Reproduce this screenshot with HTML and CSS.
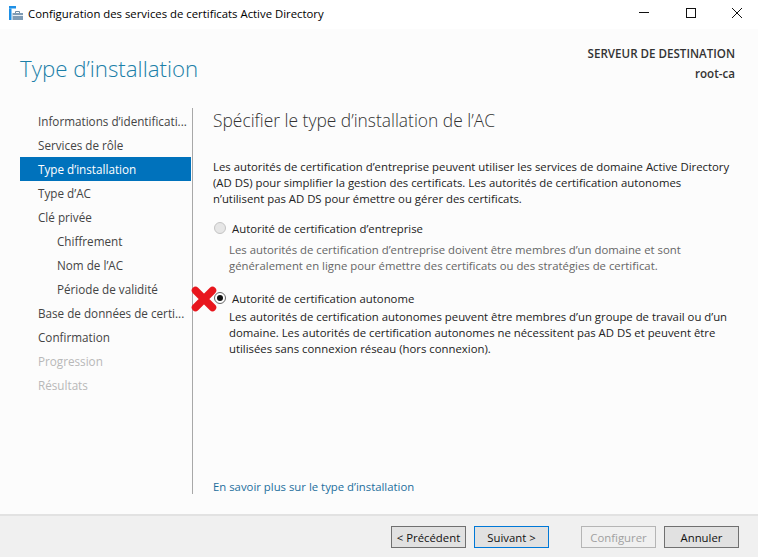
FILE: index.html
```html
<!DOCTYPE html>
<html lang="fr">
<head>
<meta charset="utf-8">
<title>Configuration des services de certificats Active Directory</title>
<link rel="stylesheet" href="styles.css">
</head>
<body>
<div class="window">
  <div class="titlebar">
    <svg class="app-icon" width="24" height="21" viewBox="0 0 24 21">
      <rect x="9" y="6" width="7" height="2.500" fill="#1e90e6"/>
      <rect x="9" y="8.500" width="2.500" height="11.500" fill="#1e90e6"/>
      <path d="M12.500 13h10.500v7H12.500z" fill="#7f9cb5"/>
      <path d="M15.500 13v-1.500h4V13" fill="none" stroke="#6f8ba3"/>
      <rect x="12.500" y="15" width="10.500" height="1" fill="#e8eef3"/>
    </svg>
    <span class="title-text">Configuration des services de certificats Active Directory</span>
    <div class="controls">
      <svg width="12" height="12" viewBox="0 0 12 12"><path d="M0 5.500h10" stroke="#111" fill="none"/></svg>
      <svg width="12" height="12" viewBox="0 0 12 12"><rect x="1.500" y="1.500" width="9" height="9" stroke="#111" fill="none"/></svg>
      <svg width="12" height="12" viewBox="0 0 12 12"><path d="M1 1l10 10M11 1L1 11" stroke="#111" fill="none"/></svg>
    </div>
  </div>
  <header class="head">
    <h1 class="page-title">Type d’installation</h1>
    <div class="server">
      <div class="server-label">SERVEUR DE DESTINATION</div>
      <div class="server-name">root-ca</div>
    </div>
  </header>
  <div class="content">
    <nav class="nav">
      <div class="nav-item">Informations d’identificati...</div>
      <div class="nav-item">Services de rôle</div>
      <div class="nav-item active">Type d’installation</div>
      <div class="nav-item">Type d’AC</div>
      <div class="nav-item">Clé privée</div>
      <div class="nav-item sub">Chiffrement</div>
      <div class="nav-item sub">Nom de l’AC</div>
      <div class="nav-item sub">Période de validité</div>
      <div class="nav-item">Base de données de certi...</div>
      <div class="nav-item">Confirmation</div>
      <div class="nav-item off">Progression</div>
      <div class="nav-item off">Résultats</div>
    </nav>
    <main class="main">
      <h2 class="main-title">Spécifier le type d’installation de l’AC</h2>
      <p class="intro">Les autorités de certification d’entreprise peuvent utiliser les services de domaine Active Directory<br>(AD DS) pour simplifier la gestion des certificats. Les autorités de certification autonomes<br>n’utilisent pas AD DS pour émettre ou gérer des certificats.</p>
      <div class="option first">
        <div class="option-row"><span class="radio disabled"></span><span class="opt-label">Autorité de certification d’entreprise</span></div>
        <p class="opt-desc">Les autorités de certification d’entreprise doivent être membres d’un domaine et sont<br>généralement en ligne pour émettre des certificats ou des stratégies de certificat.</p>
      </div>
      <div class="option second">
        <div class="option-row">
          <svg class="cross" width="28" height="28" viewBox="0 0 28 28"><path d="M5.500 5.500L22.500 22.500M22.500 5.500L5.500 22.500" stroke="#e8161d" stroke-width="7.500" stroke-linecap="round"/></svg>
          <span class="radio checked"></span><span class="opt-label">Autorité de certification autonome</span>
        </div>
        <p class="opt-desc dark">Les autorités de certification autonomes peuvent être membres d’un groupe de travail ou d’un<br>domaine. Les autorités de certification autonomes ne nécessitent pas AD DS et peuvent être<br>utilisées sans connexion réseau (hors connexion).</p>
      </div>
      <a class="more" href="#">En savoir plus sur le type d’installation</a>
    </main>
  </div>
  <footer class="footer">
    <button class="btn">&lt; Précédent</button>
    <button class="btn focus">Suivant &gt;</button>
    <button class="btn disabled-btn">Configurer</button>
    <button class="btn">Annuler</button>
  </footer>
</div>
</body>
</html>
```
FILE: styles.css
```css
* { box-sizing: border-box; }
html, body { margin: 0; padding: 0; }
body { width: 758px; height: 557px; overflow: hidden; font-family: "Open Sans", "Noto Sans", sans-serif; font-size: 11.4px; color: #1e1e1e; }
.window { display: flex; flex-direction: column; width: 758px; height: 557px; background: #fcfcfc; }
.titlebar { height: 29px; flex: none; display: flex; align-items: center; background: #fff; }
.app-icon { flex: none; align-self: flex-start; }
.title-text { margin-left: 4px; padding-bottom: 2px; font-size: 11.35px; color: #000; }
.controls { margin-left: auto; display: flex; gap: 34px; padding: 0 15px 3px 0; }
.head { height: 79px; flex: none; display: flex; justify-content: space-between; padding: 0 23px 0 20px; }
.page-title { margin: 24px 0 0; font-size: 22.3px; font-weight: 300; color: #1b7fa8; line-height: 32px; }
.server { margin-top: 17px; text-align: right; font-size: 11.6px; font-weight: 600; color: #333; line-height: 16px; }
.server-name { margin-top: 4px; }
.content { flex: 1; display: flex; min-height: 0; }
.nav { width: 193px; flex: none; height: 386px; padding: 1px 1px 0 20px; border-right: 1px solid #a8a8a8; }
.nav-item { height: 24px; line-height: 24px; padding-left: 18px; font-size: 11.7px; color: #444; white-space: nowrap; }
.nav-item.sub { padding-left: 37px; }
.nav-item.active { background: #0072bc; color: #fff; }
.nav-item.off { color: #b8b8b8; }
.main { flex: 1; padding: 0 20px; display: flex; flex-direction: column; height: 386px; }
.main-title { margin: 0; font-size: 17.4px; font-weight: 300; color: #333; line-height: 24px; }
.intro { margin: 27px 0 0; line-height: 16px; font-size: 11.35px; color: #222; white-space: nowrap; }
.option-row { display: flex; align-items: center; height: 16px; position: relative; }
.first { margin-top: 13px; }
.second { margin-top: 16px; }
.radio { width: 12px; height: 12px; border-radius: 50%; margin: 0 6px 0 1px; flex: none; }
.radio.disabled { background: #e6e6e6; border: 1px solid #c4c4c4; }
.radio.checked { background: #fff; border: 1px solid #666; position: relative; }
.radio.checked::after { content: ""; position: absolute; left: 2px; top: 2px; width: 6px; height: 6px; background: #111; border-radius: 50%; }
.opt-label { font-size: 11.35px; color: #222; }
.opt-desc { margin: 6px 0 0 16px; line-height: 16px; font-size: 11.35px; color: #666; white-space: nowrap; }
.opt-desc.dark { margin-top: 3px; color: #222; }
.cross { position: absolute; left: -23px; top: -5px; }
.more { margin-top: auto; position: relative; top: 1px; line-height: 16px; color: #1d6f9c; text-decoration: none; font-size: 11.35px; }
.footer { height: 43px; flex: none; background: #f0f0f0; border-top: 2px solid #e2e2e2; display: flex; align-items: flex-start; padding: 10px 19px 0 0; justify-content: flex-end; }
.btn { width: 75px; height: 22px; padding: 0; border: 1px solid #707070; background: #e1e1e1; color: #111; font-family: inherit; font-size: 11.35px; margin-left: 8px; }
.btn.focus { border-color: #0078d7; }
.btn.disabled-btn { margin-left: 32px; border-color: #b5b5b5; background: #f0f0f0; color: #a0a0a0; }
```
